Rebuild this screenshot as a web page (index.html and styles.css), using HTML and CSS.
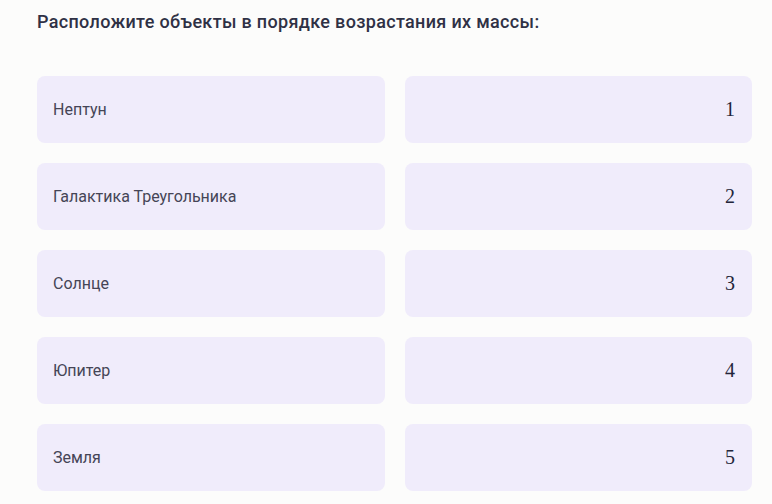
FILE: index.html
```html
<!DOCTYPE html>
<html lang="ru">
<head>
  <meta charset="UTF-8" />
  <meta name="viewport" content="width=device-width, initial-scale=1.0" />
  <title>Порядок по массе</title>
  <link rel="stylesheet" href="styles.css">
</head>
<body>
  <div class="task">
    <h2 class="question">Расположите объекты в порядке возрастания их массы:</h2>

    <div class="board">
      <div class="item">Нептун</div>
      <div class="slot">1</div>
      <div class="item">Галактика Треугольника</div>
      <div class="slot">2</div>
      <div class="item">Солнце</div>
      <div class="slot">3</div>
      <div class="item">Юпитер</div>
      <div class="slot">4</div>
      <div class="item">Земля</div>
      <div class="slot">5</div>
    </div>
  </div>
</body>
</html>
```

FILE: styles.css
```css
body {
  font-family: Roboto, "Noto Sans", sans-serif;
  background-color: #fcfcfb;
  color: #2b2d42;
  margin: 0;
  padding: 0;
}
.task {
  width: 715px;
  padding: 10px 0 0 37px;
}
.question {
  font-size: 18px;
  font-weight: 500;
  line-height: 24px;
  margin: 0 0 42px 0;
  color: #2f3145;
  letter-spacing: 0.33px;
}
.board {
  display: grid;
  grid-template-columns: 348px 347px;
  column-gap: 20px;
  row-gap: 20px;
}
.item, .slot {
  height: 67px;
  border-radius: 8px;
  background-color: #f0ecfb;
  display: flex;
  align-items: center;
  box-sizing: border-box;
}
.item {
  padding-left: 16px;
  font-size: 16px;
  color: #454556;
}
.slot {
  justify-content: flex-end;
  padding-right: 17px;
  font-family: "Liberation Serif", "Times New Roman", serif;
  font-size: 20px;
  color: #23253a;
}
```
